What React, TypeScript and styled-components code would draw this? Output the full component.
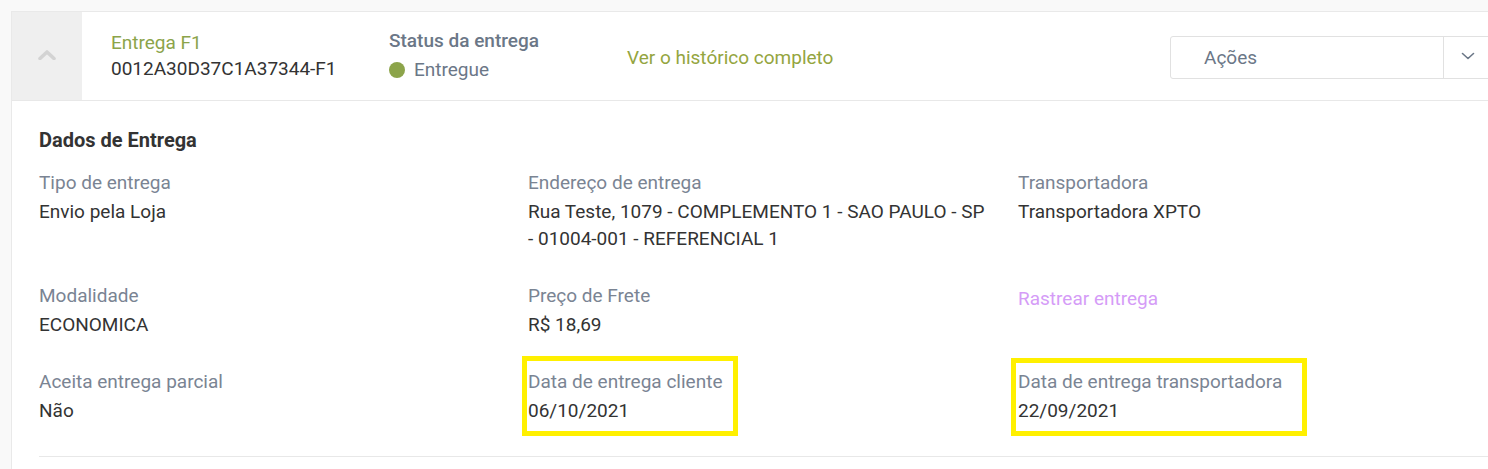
import React from "react";
import styled, { createGlobalStyle } from "styled-components";

const GlobalStyle = createGlobalStyle`
  html, body {
    margin: 0;
    padding: 0;
    overflow: hidden;
    background: #f9f9f9;
    font-family: Roboto, "Noto Sans", Arial, sans-serif;
  }
  * { box-sizing: border-box; }
`;

const Page = styled.div`
  padding: 11px 0 0 11px;
  width: 1530px;
`;

const Card = styled.section`
  width: 1500px;
  background: #ffffff;
  border: 1px solid #e9e9e9;
  border-right: none;
`;

const Header = styled.header`
  display: flex;
  align-items: stretch;
  height: 89px;
  border-bottom: 1px solid #e8e8e8;
`;

const ToggleCell = styled.button`
  width: 70px;
  flex: 0 0 70px;
  border: none;
  background: #efefef;
  display: flex;
  align-items: center;
  justify-content: center;
  padding: 0 0 3px;
  cursor: pointer;
`;

const HeaderBlock = styled.div<{ $width?: number; $pl?: number }>`
  display: flex;
  flex-direction: column;
  justify-content: center;
  width: ${(p) => (p.$width ? `${p.$width}px` : "auto")};
  flex: 0 0 auto;
  padding-left: ${(p) => p.$pl ?? 0}px;
`;

const DeliveryName = styled.div`
  font-size: 19px;
  line-height: 26px;
  color: #8ca44a;
`;

const DeliveryId = styled.div`
  font-size: 19px;
  line-height: 26px;
  color: #333333;
`;

const StatusTitle = styled.div`
  font-size: 19px;
  font-weight: 500;
  line-height: 28px;
  color: #6b7787;
`;

const StatusValue = styled.div`
  display: flex;
  align-items: center;
  gap: 9px;
  font-size: 19px;
  line-height: 30px;
  color: #6b7787;
`;

const Dot = styled.span`
  width: 16px;
  height: 16px;
  border-radius: 50%;
  background: #8ca44a;
  flex: 0 0 16px;
`;

const HistoryLink = styled.a`
  font-size: 19px;
  color: #94a540;
  text-decoration: none;
  align-self: center;
  margin-top: 3px;
  flex: 1 1 auto;
`;

const Actions = styled.div`
  align-self: center;
  margin-top: 2px;
  display: flex;
  width: 322px;
  height: 43px;
  border: 1px solid #e1e1e1;
  border-radius: 3px;
  margin-right: 19px;
`;

const ActionsLabel = styled.div`
  flex: 1;
  display: flex;
  align-items: center;
  padding-left: 33px;
  font-size: 19px;
  color: #6b7787;
  border-right: 1px solid #e1e1e1;
`;

const ActionsCaret = styled.div`
  width: 47px;
  flex: 0 0 47px;
  display: flex;
  align-items: center;
  justify-content: center;
  padding-bottom: 3px;
`;

const Body = styled.div`
  padding: 27px 0 0 27px;
`;

const SectionTitle = styled.h3`
  margin: 0 0 14px;
  font-size: 20px;
  font-weight: 700;
  line-height: 25px;
  color: #333333;
`;

const FieldGrid = styled.div`
  display: grid;
  grid-template-columns: 489px 490px 490px;
  row-gap: 28px;
`;

const Field = styled.div`
  position: relative;
  padding-right: 28px;
`;

const Label = styled.div`
  font-size: 19px;
  line-height: 31px;
  color: #7a8493;
`;

const Value = styled.div`
  font-size: 19px;
  line-height: 27px;
  color: #333333;
`;

const TrackLink = styled.a`
  display: inline-block;
  margin-top: 4px;
  font-size: 19px;
  line-height: 30px;
  color: #d59cf7;
  text-decoration: none;
`;

const Highlight = styled.span<{ $left: number; $top: number; $w: number; $h: number }>`
  position: absolute;
  left: ${(p) => p.$left}px;
  top: ${(p) => p.$top}px;
  width: ${(p) => p.$w}px;
  height: ${(p) => p.$h}px;
  border: 5px solid #fff000;
  pointer-events: none;
`;

const Divider = styled.hr`
  margin: 32px 0 0;
  border: none;
  border-top: 1px solid #e8e8e8;
  height: 40px;
`;

const ChevronUp = () => (
  <svg width="18" height="11" viewBox="0 0 18 11" fill="none">
    <polyline points="2,9.5 9,3 16,9.5" stroke="#d3d3d3" strokeWidth="3.6" strokeLinecap="round" strokeLinejoin="round" />
  </svg>
);

const ChevronDown = () => (
  <svg width="14" height="8" viewBox="0 0 14 8" fill="none">
    <polyline points="1.5,1.5 7,6.5 12.5,1.5" stroke="#6b7787" strokeWidth="1.6" strokeLinecap="round" strokeLinejoin="round" />
  </svg>
);

type Item = {
  label?: string;
  value?: string;
  link?: string;
  hl?: { left: number; top: number; w: number; h: number };
};

const items: Item[] = [
  { label: "Tipo de entrega", value: "Envio pela Loja" },
  { label: "Endereço de entrega", value: "Rua Teste, 1079 - COMPLEMENTO 1 - SAO PAULO - SP - 01004-001 - REFERENCIAL 1" },
  { label: "Transportadora", value: "Transportadora XPTO" },
  { label: "Modalidade", value: "ECONOMICA" },
  { label: "Preço de Frete", value: "R$ 18,69" },
  { link: "Rastrear entrega" },
  { label: "Aceita entrega parcial", value: "Não" },
  { label: "Data de entrega cliente", value: "06/10/2021", hl: { left: -6, top: -10, w: 216, h: 80 } },
  { label: "Data de entrega transportadora", value: "22/09/2021", hl: { left: -7, top: -8, w: 296, h: 78 } },
];

export default function App() {
  return (
    <>
      <GlobalStyle />
      <Page>
        <Card>
          <Header>
            <ToggleCell aria-label="Recolher">
              <ChevronUp />
            </ToggleCell>
            <HeaderBlock $width={307} $pl={29}>
              <DeliveryName>Entrega F1</DeliveryName>
              <DeliveryId>0012A30D37C1A37344-F1</DeliveryId>
            </HeaderBlock>
            <HeaderBlock $width={238}>
              <StatusTitle>Status da entrega</StatusTitle>
              <StatusValue>
                <Dot />
                Entregue
              </StatusValue>
            </HeaderBlock>
            <HistoryLink href="#">Ver o histórico completo</HistoryLink>
            <Actions>
              <ActionsLabel>Ações</ActionsLabel>
              <ActionsCaret>
                <ChevronDown />
              </ActionsCaret>
            </Actions>
          </Header>
          <Body>
            <SectionTitle>Dados de Entrega</SectionTitle>
            <FieldGrid>
              {items.map((it, i) => (
                <Field key={i}>
                  {it.label && <Label>{it.label}</Label>}
                  {it.value && <Value>{it.value}</Value>}
                  {it.link && <TrackLink href="#">{it.link}</TrackLink>}
                  {it.hl && <Highlight $left={it.hl.left} $top={it.hl.top} $w={it.hl.w} $h={it.hl.h} />}
                </Field>
              ))}
            </FieldGrid>
            <Divider />
          </Body>
        </Card>
      </Page>
    </>
  );
}
